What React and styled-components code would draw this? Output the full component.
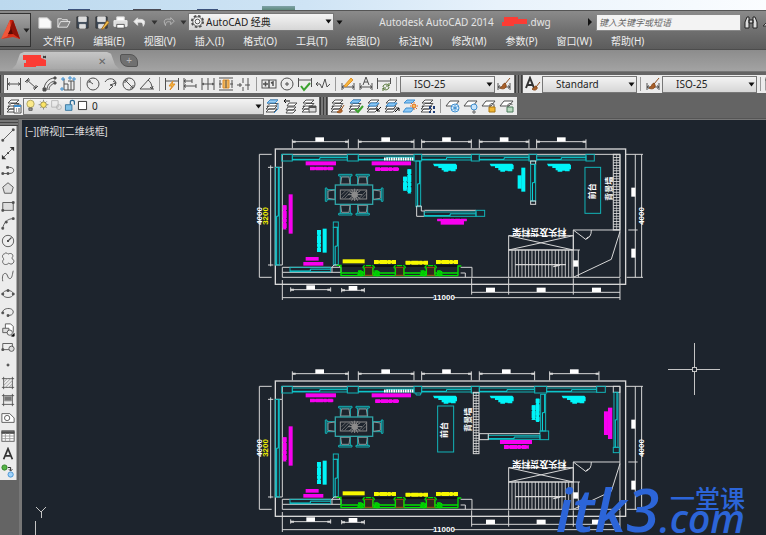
import React, { useState } from 'react';
import styled, { createGlobalStyle } from 'styled-components';

const GlobalStyle = createGlobalStyle`
  * {
    box-sizing: border-box;
  }
  body {
    margin: 0;
    overflow: hidden;
    font-family: "Noto Sans", "Noto Sans CJK SC", sans-serif;
    font-size: 10px;
  }
  button, select, input {
    font-family: inherit;
    margin: 0;
  }
`;

const Window = styled.div`
  display: flex;
  flex-direction: column;
  height: 100vh;
  background: #646464;
  overflow: hidden;
`;
const Desktop = styled.div`
  flex: none;
  height: 10px;
  background:
    linear-gradient(#7fa2a8, #5e8a7c) 262px 6px / 33px 4px no-repeat,
    linear-gradient(#3c527c, #3c527c) 68px 9px / 22px 1px no-repeat,
    linear-gradient(#4a4a55, #4a4a55) 133px 9px / 28px 1px no-repeat,
    linear-gradient(#3c527c, #3c527c) 197px 9px / 21px 1px no-repeat,
    linear-gradient(90deg, #bcd9ee, #cfe4f5 40%, #e8f2fb 65%, #fbfdff);
`;
const Header = styled.header`
  display: flex;
  flex: none;
  height: 40px;
  border-top: 1px solid #555;
  border-bottom: 1px solid #4c4c4c;
  background: linear-gradient(#8b8b8b, #707070 50%, #5c5c5c);
`;
const AppButton = styled.button`
  display: flex;
  align-items: center;
  flex: none;
  width: 31px;
  height: 34px;
  margin-top: 2px;
  padding: 0;
  border: 1px solid #333;
  border-left: none;
  background: linear-gradient(#a2a2a2, #6b6b6b);
`;
const HeaderRows = styled.div`
  flex: 1;
  min-width: 0;
`;
const TitleRow = styled.div`
  display: flex;
  align-items: center;
  height: 22px;
  margin-right: -4px;
  padding-left: 4px;
`;
const QuickButton = styled.button`
  display: flex;
  align-items: center;
  justify-content: center;
  flex: none;
  width: ${p => p.$narrow ? 10 : 19}px;
  height: 18px;
  padding: 0;
  border: none;
  background: none;
`;
const SelectBox = styled.div`
  position: relative;
  flex: ${p => p.$grow ? '0 0 ' + p.$grow + 'px' : 'none'};
  height: ${p => p.$tall ? 18 : 17}px;
  svg {
    position: absolute;
    pointer-events: none;
  }
  .arrow {
    right: 2px;
    top: 6px;
  }
  .lead {
    left: 2px;
    top: 1px;
  }
`;
const Select = styled.select`
  appearance: none;
  display: block;
  width: 100%;
  height: 100%;
  padding: 0 0 0 ${p => p.$indent}px;
  border: 1px solid #777;
  border-radius: 0;
  background: linear-gradient(#f4f4f4, #d6d6d6);
  color: #222;
  font-size: 10px;
  line-height: 14px;
`;
const Title = styled.div`
  display: flex;
  align-items: center;
  flex: 1;
  justify-content: center;
  gap: 8px;
  min-width: 0;
  color: #e4e4e4;
  font-size: 10px;
  white-space: nowrap;
`;
const Search = styled.input`
  flex: 0 0 145px;
  height: 17px;
  padding: 0 2px;
  border: 1px solid #888;
  border-radius: 0;
  background: #f3f3f3;
  font-size: 9px;
  font-style: italic;
  &::placeholder {
    color: #666;
    opacity: 1;
  }
`;
const Menu = styled.nav`
  display: flex;
  gap: 19px;
  padding-left: 12px;
`;
const MenuLink = styled.a`
  color: #eee;
  font-size: 10px;
  line-height: 17px;
  text-decoration: none;
  white-space: nowrap;
`;

const Tabs = styled.div`
  display: flex;
  align-items: flex-end;
  flex: none;
  height: 22px;
  padding: 0 0 2px 12px;
  background: linear-gradient(#8c8c8c, #a3a3a3);
  border-bottom: 1px solid #777;
`;
const Tab = styled.div`
  display: flex;
  align-items: center;
  justify-content: space-between;
  width: 107px;
  height: 17px;
  padding: 0 13px 0 10px;
  background: linear-gradient(#c6c6c6, #a8a8a8);
  clip-path: polygon(0 100%, 4px 75%, 8px 10%, 12px 0, 95px 0, 99px 10%, 103px 75%, 100% 100%);
`;
const TabClose = styled.button`
  padding: 0;
  border: none;
  background: none;
  color: #666;
  font-size: 10px;
  line-height: 12px;
`;
const NewTab = styled.button`
  width: 18px;
  height: 13px;
  margin: 0 0 2px 1px;
  padding: 0;
  border: 1px solid #555;
  border-radius: 2px 8px 2px 8px;
  background: #707070;
  color: #bbb;
  font-size: 10px;
  line-height: 9px;
`;

const Bars = styled.div`
  display: flex;
  flex-direction: column;
  flex: none;
  gap: 4px;
  padding: 3px 0;
  border-bottom: 1px solid #555;
`;
const BarRow = styled.div`
  display: flex;
  gap: 1px;
`;
const Grip = styled.div`
  flex: none;
  width: ${p => p.$edge ? 3 : 7}px;
  height: 18px;
  background: repeating-linear-gradient(90deg, #3d3d3d 0 1px, #777 1px 3px);
`;
const Panel = styled.div`
  display: flex;
  align-items: center;
  flex: none;
  height: 18px;
  padding: 0 1px;
  background: #ececec;
`;
const Tool = styled.button`
  display: flex;
  align-items: center;
  justify-content: center;
  flex: ${p => p.$stack ? '1' : 'none'};
  width: ${p => p.$stack ? 15 : 18}px;
  min-height: 0;
  padding: 0;
  border: none;
  background: none;
`;
const Divider = styled.span`
  flex: none;
  width: 1px;
  height: 14px;
  margin: 0 3px;
  background: #999;
`;
const LayerLead = styled.div`
  display: flex;
  position: absolute;
  left: 1px;
  top: 1px;
  pointer-events: none;
  svg {
    position: static;
  }
`;

const Body = styled.div`
  display: flex;
  flex: 1;
  min-height: 0;
`;
const Side = styled.aside`
  flex: none;
  width: 18px;
`;
const SideGrip = styled.div`
  height: 7px;
  background: repeating-linear-gradient(#444 0 1px, #777 1px 3px);
`;
const SidePanel = styled.div`
  display: flex;
  flex-direction: column;
  width: 17px;
  height: 354px;
  background: #ececec;
  border-right: 1px solid #aaa;
`;
const Viewport = styled.main`
  position: relative;
  flex: 1;
  min-width: 0;
  margin: 0 0 0 1px;
  border: 2px solid #777;
  border-width: 1px 0 0 3px;
  background: #1d242d;
  overflow: hidden;
`;
const Sheet = styled.svg`
  display: block;
  width: 100%;
  height: 100%;
`;
const ViewLabel = styled.div`
  position: absolute;
  left: 3px;
  top: 5px;
  color: #ddd;
  font-family: "Liberation Sans", "Noto Sans CJK SC", sans-serif;
  font-size: 10px;
  line-height: 14px;
`;
const Watermark = styled.div`
  position: absolute;
  right: 21px;
  bottom: 3px;
  display: flex;
  align-items: flex-end;
  color: #2c65d8;
  font-family: "Open Sans", "Noto Sans CJK SC", sans-serif;
`;
const MarkBig = styled.span`
  font-size: 60px;
  font-style: italic;
  font-weight: 600;
  line-height: 46px;
`;
const MarkSide = styled.span`
  display: flex;
  flex-direction: column;
  align-items: flex-end;
`;
const MarkName = styled.span`
  font-size: 25px;
  font-weight: 500;
  line-height: 12px;
`;
const MarkCom = styled.span`
  font-size: 39px;
  font-style: italic;
  font-weight: 600;
  line-height: 28px;
`;

const K = '#505050';
const O = '#e0902a';
const G = '#3aa22e';
const B = '#3f8fd0';

const layers = (
  <g>
    <path d="M5 2h8l-3 3H2zM5 5.500h8l-3 3H2z" fill="#fff" />
    <path d="M4 8h8l-3 3H1zM4 11h8l-3 3H1z" fill="#fff" />
  </g>
);
const plane = <path d="M5 3h9l-4 5H1z" fill="#fff" />;
const brush = <path d="M14 2l-5 6M9 7c-3 1-2 4-5 5 3 2 7 0 6-3z" stroke="#8a4b1c" fill="#a85f28" />;
const dimBase = <path d="M2 7v7M14 7v7M2 11h12M4 9.500L2 11l2 1.500M12 9.500l2 1.500-2 1.500" />;

const ICONS = {
  linear: <path d="M1.500 2v12M14.500 2v12M2 8h12M4 6.500L2 8l2 1.500M12 6.500L14 8l-2 1.500" />,
  aligned: <path d="M1 6l4-4M10 14l4-4M3 4l9 8M3 7V4h3M12 9v3H9" />,
  arcLen: <g><path d="M2 14C2 7 7 2 13 2M7 14c0-4 3-6 6-7M5 14c0-5 3-8 8-9" /><path d="M1 12h3v3H1zM12 1h2v2h-2zM12 6h2v2h-2z" fill={K} /></g>,
  ordinate: <g><path d="M4 3v11h10M4 8h4v6M8 5h6v9M11 5v9" /><path d="M2 2h2v2H2zM9 1h2v2H9zM13 2h2v2h-2zM1 12h2v2H1z" stroke={B} /></g>,
  radius: <g><circle cx="8" cy="8" r="6" /><path d="M8 8L4 5M4 7V5h2" /></g>,
  jogged: <path d="M2 6c3-5 10-4 11 1M13 7l-6 2 3 1-4 4M10 5l3 2-1 3" />,
  diameter: <g><circle cx="8" cy="8" r="6" /><path d="M4 4l8 8M4 7V4h3M12 9v3H9" /></g>,
  angular: <path d="M1 13h14M1 13L11 2M9 4c3 2 4 5 4 9M11 11l2 2 1-3" />,
  quick: <g><path d="M1.500 2v12M14.500 2v12M2 5h12" /><path d="M9 5l-4 5h3l-2 4 5-6H8z" stroke={O} fill="#f6b73c" /></g>,
  baseline: <path d="M2 2v12M2 5h8M10 3v4M2 10h12M14 8v4M4 3.500L2 5l2 1.500M4 8.500L2 10l2 1.500" />,
  continue: <path d="M2 2v12M8 2v12M14 2v12M2 8h12M4 7L2.500 8 4 9M12 7l1.500 1L12 9" />,
  space: <g><path d="M1 2h14M1 14h14M1 8h3M12 8h3M2 4v8M14 4v8" /><path d="M5 4h6v8H5z" stroke={O} fill="#efb45a" /><path d="M8 4v8" /></g>,
  break: <path d="M1 9h5M9 9h5M7 2v5M7 11v4M12 2v12M4 7v4" />,
  tolerance: <g><rect x="1" y="4" width="14" height="8" /><path d="M8 4v8M2 8h5M4.500 5.500v5M10 7l2-1v4" strokeWidth="1.500" /></g>,
  center: <g><circle cx="8" cy="8" r="6" /><path d="M6 8h4M8 6v4" /></g>,
  inspect: <g><path d="M1.500 2v9M14.500 2v9M2 4h12" /><path d="M4 10l3 4 6-7" stroke={G} strokeWidth="2" /></g>,
  jogLine: <path d="M1 8h4l2 4 3-9 2 8 3-3M1 8l2-2M1 8l2 2" />,
  dimEdit: <g>{dimBase}<path d="M4 10l7-8 2 2-7 7z" stroke={O} fill="#f6b73c" /></g>,
  textEdit: <g>{dimBase}<path d="M5 9l3-8 3 8M6 6h4" /></g>,
  update: <g><path d="M1.500 2v11M14.500 2v6M2 5h12" /><path d="M7 11c0-3 5-4 6-1M13 11c0 3-5 4-6 1M13 7v3h-3M7 15v-3h3" stroke="#4c6f2c" /></g>,
  dimStyle: <g>{dimBase}{brush}</g>,
  textStyle: <g><path d="M1 12L5 2l4 10M2.500 9h5" stroke="#333" strokeWidth="2" /><path d="M15 6l-4 5M11 10c-2 0-2 3-4 3 2 2 6 1 5-2z" stroke="#8a4b1c" fill="#a85f28" /></g>,
  table: <g><rect x="1" y="2" width="14" height="12" fill="#fff" /><path d="M1 3h14v2H1z" fill={K} /><path d="M1 8h14M1 11h14M5 5v9M10 5v9" stroke="#999" /></g>,
  layerProps: <g>{layers}<path d="M8 7h7v8H8z" fill="#fff" /><path d="M8 8h7" stroke={B} strokeWidth="2" /><path d="M10 11h1M12 11h2M10 13h1M12 13h2" /></g>,
  layerCur: <g>{layers}<path d="M5 2h8l-3 3H2z" fill="#9dcdf0" stroke={B} /><path d="M13 5v6l-4 4" stroke={B} /></g>,
  layerPrev: <g><path d="M6 5h8l-3 3H4zM5 9h8l-3 3H3zM5 12h8l-3 3H3z" fill="#fff" /><path d="M1 3h6M3 1L1 3l2 2" stroke="#111" /></g>,
  layerState: <g>{layers}<path d="M8 8h7v6H8z" fill="#ddd" /><path d="M8 9h7" strokeWidth="2" /></g>,
  layerBrush: <g>{layers}<path d="M14 7l-3 5M11 11c-2 0-2 3-4 3 3 2 6 0 5-2z" stroke="#9b5521" fill="#b8682c" /></g>,
  layerOk: <g>{layers}<path d="M5 2h8l-3 3H2z" fill="#8cc8f5" stroke={B} /><path d="M7 11l3 3 5-6" stroke={G} strokeWidth="2" /></g>,
  layerIn: <g>{layers}<path d="M5 5h8l-3 3H2z" fill="#8cc8f5" stroke={B} /><path d="M15 9l-4 4M11 10v3h3" stroke="#111" /></g>,
  layerOut: <g>{layers}<path d="M5 5h8l-3 3H2z" fill="#8cc8f5" stroke={B} /><path d="M11 14l4-4M12 10h3v3" stroke="#111" /></g>,
  layerIso: <g><path d="M5 2h8l-3 3H2zM4 10h8l-3 4H1z" fill="#8cc8f5" stroke={B} /><circle cx="12" cy="8" r="2" stroke="#e06a1c" fill="#f7c05c" /><path d="M12 4v1M12 11v1M8 8h1M15 8h1M9 5l1 1M14 10l1 1" stroke="#e06a1c" /></g>,
  layerWalk: <g>{layers}<path d="M10 8v3M14 8v3M10 13v2M14 13v2" stroke="#1e3d78" strokeWidth="2" /></g>,
  freeze: <g>{plane}<circle cx="10" cy="10" r="4" fill="#dff0fd" stroke={B} /><path d="M10 7v6M7.500 8.500l5 3M7.500 11.500l5-3" stroke={B} /></g>,
  off: <g>{plane}<circle cx="11" cy="9" r="3" fill="#c9e4fa" stroke={B} /><path d="M10 13h2v2h-2z" stroke="#666" /></g>,
  lock: <g>{plane}<path d="M9 9V7c0-2 4-2 4 0v2" /><path d="M8 9h6v5H8z" fill="#f2b632" stroke="#a87412" /></g>,
  unlock: <g>{plane}<path d="M9 9V7c0-2 4-2 4 0" /><path d="M8 9h6v5H8z" fill="#bcd9c0" stroke="#4b7a5a" /></g>,

  line: <g><path d="M2 14L14 2" /><path d="M1 13h2v2H1zM13 1h2v2h-2z" fill={K} /></g>,
  xline: <g><path d="M2 14L14 2" /><path d="M1 15v-5l5 5zM15 1v5l-5-5zM7 7h2v2H7z" fill="#333" stroke="none" /></g>,
  pline: <g><path d="M2 12h6M8 5h2c6 0 6 7 0 7H8" /><path d="M6.500 4h2v2h-2zM1 11h2v2H1zM7 11h2v2H7z" fill={K} /></g>,
  polygon: <path d="M8 2l6 5-2 7H4L2 7z" fill="#ddd" />,
  rect: <g><path d="M2 4h12v9H2z" fill="#ddd" /><path d="M1 12h2v2H1zM13 3h2v2h-2z" fill={K} /></g>,
  arc: <g><path d="M2 14C3 8 7 3 14 3" /><path d="M1 13h2v2H1zM5 6h2v2H5zM13 2h2v2h-2z" fill={K} /></g>,
  circle: <g><circle cx="8" cy="8" r="6.500" fill="#eee" /><path d="M8 8l4-4M7.500 7.500h1v1h-1z" strokeWidth="1.300" /></g>,
  cloud: <path d="M4 2c1-1.500 3-1 4 .5 2-1.500 6-1 5.500 2.500-.5 1-1 1.500-1 2.500 2 1 3 3 1.500 5-1.500 2-4 1.500-5 0-2 2.500-6 2.500-7-.5-.5-2 .5-3 1.500-4C1 6 1 3 4 2z" fill="#eee" />,
  spline: <path d="M2 14c-1-5 0-9 3-9s2 6 5 6 3-6 4-9" />,
  ellipse: <g><ellipse cx="8" cy="8" rx="6" ry="4" /><path d="M1 7h2v2H1zM13 7h2v2h-2zM7 3h2v2H7z" fill={K} /></g>,
  ellArc: <g><path d="M2 9c-1-6 12-7 12-1 0 3-3 4-6 4" /><path d="M1 8h2v2H1zM7 11h2v2H7z" fill={K} /></g>,
  insert: <g><path d="M5 6V1h6l3 3v7" fill="#fff" /><path d="M2 6h7v5H2z" fill="#ddd" /><circle cx="10" cy="11" r="3" fill="#eee" /><path d="M12 15h3v-3z" fill="#111" stroke="#111" /></g>,
  block: <g><path d="M2 4h11v7H2z" fill="#eee" /><circle cx="12" cy="10" r="3" fill="#ddd" /><path d="M1 10h2v2H1z" fill={K} /></g>,
  point: <path d="M7 7h2v2H7z" fill={K} />,
  hatch: <g><path d="M3 1v14M13 1v14M1 3h14M1 13h14" /><path d="M3 7l4-4M3 11l8-8M5 13l8-8M9 13l4-4" stroke="#999" /></g>,
  gradient: <g><path d="M3 1v14M13 1v14M1 3h14M1 13h14" /><path d="M4 4h8v5H4z" fill="#777" stroke="#999" /></g>,
  region: <g><path d="M1 3h9l5 5v5H1z" fill="#fff" /><circle cx="7" cy="8" r="3" /></g>,
  mtext: <path d="M3 14L8 2l5 12M5 10h6" stroke="#333" strokeWidth="2" />,
  addSel: <g><circle cx="4" cy="4" r="3" fill="#55b345" stroke="#2e7d26" /><circle cx="11" cy="12" r="3" fill="#9fd2fa" stroke={B} /><path d="M8 4h3v3M9 6l2 2 2-2" stroke="#111" /></g>,

  bulb: <g><circle cx="8" cy="6" r="4.500" fill="#fbe98a" stroke="#a59b55" /><path d="M6 11h4v3H6z" fill="#999" /></g>,
  sun: <g><circle cx="8" cy="7" r="3.500" fill="#fbe466" stroke="#8b8345" /><path d="M8 1v2M8 11v2M2 7h2M12 7h2M4 3l1 1M11 10l1 1M12 3l-1 1M5 10l-1 1" stroke="#777" /></g>,
  vpSun: <g stroke="#b0b0b0"><path d="M2 2h8v8H2z" /><circle cx="11" cy="10" r="3" /></g>,
  padlock: <g><path d="M9 7V4c0-3 5-3 5 0v3" stroke="#2b6a94" strokeWidth="1.500" /><path d="M3 7h8v7H3z" fill="#7fc0e6" stroke="#2b6a94" /></g>,
  swatch: <path d="M3 3h10v10H3z" fill="#fff" stroke="#111" />,

  newFile: <path d="M2 3h9l4 4v7H2z" fill="#f8f8f8" stroke="#ccc" />,
  open: <path d="M2 13V4h4l1 1h5v2M2 13l3-6h10l-3 6z" fill="#888" stroke="#e4e4e4" />,
  save: <g><path d="M2 2h12v12H2z" fill="#3e4a58" stroke="#333" /><path d="M4 2h8v5H4zM5 10h6v4H5z" fill="#ddd" stroke="#ddd" /></g>,
  saveAs: <g><path d="M2 2h12v12H2z" fill="#3e4a58" stroke="#333" /><path d="M4 2h8v5H4zM5 10h6v4H5z" fill="#ddd" stroke="#ddd" /><path d="M14 6l2 2-6 7-2 0z" fill="#f3c14d" stroke="#9b6520" /></g>,
  print: <g><path d="M4 2h8v4H4z" fill="#fff" stroke="#ddd" /><path d="M1 6h14v6H1z" fill="#ddd" stroke="#eee" /><path d="M4 10h8v4H4z" fill="#fff" stroke="#555" /></g>,
  undo: <path d="M6 3L2 7l4 4V8c4-1 6 0 6 4 4-7-1-8-6-7z" fill="#eee" stroke="#ddd" />,
  redo: <path d="M10 3l4 4-4 4V8c-4-1-6 0-6 4-4-7 1-8 6-7z" fill="none" stroke="#bbb" />,
  find: <g stroke="#222" fill="#ddd"><path d="M2 8l2-5h2v11H2zM10 14V3h2l2 5v6zM6 6h4v3H6z" /></g>,
  gear: <g><circle cx="8" cy="8" r="6" strokeDasharray="2.700 2" strokeWidth="2" /><circle cx="8" cy="8" r="5" fill="#f2f2f2" /><circle cx="8" cy="8" r="2.500" /></g>,
};

const Icon = ({ name, size = 16, className }) => (
  <svg className={className} width={size} height={size} viewBox="0 0 16 16" fill="none" stroke={K} aria-hidden="true">
    {ICONS[name]}
  </svg>
);

const Caret = ({ color = '#111', className }) => (
  <svg className={className} width="7" height="5" viewBox="0 0 7 5" aria-hidden="true">
    <path d="M0.500 0.500h6L3.500 4.500z" fill={color} />
  </svg>
);

const ToolSet = ({ items, stack }) => items.map((name, i) => (
  name === '|' ? <Divider key={i} /> : (
    <Tool key={i} type="button" aria-label={name} $stack={stack}>
      <Icon name={name} size={stack ? 14 : 16} />
    </Tool>
  )
));

const DropDown = ({ label, options, width, indent, tall, children }) => (
  <SelectBox $grow={width} $tall={tall}>
    <Select aria-label={label} $indent={indent}>
      {options.map(o => <option key={o}>{o}</option>)}
    </Select>
    {children}
    <Caret className="arrow" />
  </SelectBox>
);

const MENUS = ['文件(F)', '编辑(E)', '视图(V)', '插入(I)', '格式(O)', '工具(T)', '绘图(D)', '标注(N)', '修改(M)', '参数(P)', '窗口(W)', '帮助(H)'];

const DIM_TOOLS = [
  'linear', 'aligned', 'arcLen', 'ordinate', '|', 'radius', 'jogged', 'diameter', 'angular', '|',
  'quick', 'baseline', 'continue', 'space', 'break', '|', 'tolerance', 'center', 'inspect', 'jogLine', '|',
  'dimEdit', 'textEdit', 'update', '|',
];
const LAYER_TOOLS = [
  'layerBrush', 'layerOk', 'layerIn', 'layerOut', 'layerIso', 'layerWalk', '|', 'freeze', 'off', 'lock', 'unlock',
];
const DRAW_TOOLS = [
  'line', 'xline', 'pline', 'polygon', 'rect', 'arc', 'circle', 'cloud', 'spline', 'ellipse', 'ellArc',
  'insert', 'block', 'point', 'hatch', 'gradient', 'region', 'table', 'mtext', 'addSel',
];

const CYAN = '#12b4b8';
const AQUA = '#00f4f8';
const PINK = '#f800f0';
const WHITE = '#d8d8d8';

/* The plans are drawn at three units to a screen pixel. */
const Box = ({ x, y, w, h, color = CYAN }) => (
  <rect x={x} y={y} width={w} height={h} stroke={color} strokeWidth="3" fill="none" />
);

const Wall = ({ x, y = 78, w, h = 12 }) => {
  const mid = w > h
    ? `M${x} ${y + h - 2}h${w / 2}v${-h / 2 + 1}h${w / 2}`
    : `M${x + w - 3} ${y}v${h / 2}h${-w / 2 + 1}v${h / 2}`;
  return (
    <g fill="none" stroke={CYAN}>
      <rect x={x} y={y} width={w} height={h} strokeWidth="3" />
      <path d={mid} stroke="#0cd8dc" strokeWidth="3" />
    </g>
  );
};

// a dimension line with its end ticks and a filled value
const TopDim = ({ from, to, y = 35, down = 20, label }) => (
  <g stroke={WHITE} strokeWidth="3">
    <path d={`M${from} ${y}H${to}M${from} ${y - 7}V${y + down}M${to} ${y - 7}V${y + down}`} />
    <path d={`M${from} ${y}h10M${to} ${y}h-10`} strokeWidth="6" />
    <rect x={(label || (from + to) / 2) - 13} y={y - 13} width="26" height="13" fill="#fff" stroke="none" />
  </g>
);

const Bar = ({ x, y, w, h, color }) => <rect x={x} y={y} width={w} height={h} fill={color} />;

// small print that closes up into a ragged bar
const Print = ({ x, y, w, h, color }) => {
  const wide = w > h;
  const d = wide ? `M${x} ${y + h / 2}h${w}` : `M${x + w / 2} ${y}v${h}`;
  const t = wide ? h : w;
  return (
    <g stroke={color}>
      <path d={d} strokeWidth={t * 0.75} />
      <path d={d} strokeWidth={t} strokeDasharray="14 3 22 2 9 4" />
    </g>
  );
};

const Tag = ({ x, y = 101 }) => (
  <path
    d={`M${x} ${y}h68l4 5v12h-4v6h-14v-2h-8v3h-14v-4h-6v-7h-10v-5h-12z`}
    fill={AQUA}
  />
);

const Ladder = ({ x, y, w, h }) => (
  <g stroke={WHITE} fill="none">
    <path d={`M${x + w / 2} ${y}v${h}`} stroke="#c4c4c4" strokeWidth={w} strokeDasharray="3 5" />
    <path d={`M${x + w / 2} ${y}v${h}`} strokeWidth="3" strokeOpacity="0.700" />
    <rect x={x} y={y} width={w} height={h} strokeWidth="3" />
  </g>
);

const PlanText = ({ x, y, size = 24, color = '#fff', turn = -90, children }) => (
  <text
    transform={`translate(${x} ${y}) rotate(${turn})`}
    fontFamily="'Liberation Sans Narrow', 'Liberation Sans', 'Noto Sans CJK SC', sans-serif"
    fontSize={size}
    fontWeight="700"
    textAnchor="middle"
    dominantBaseline="central"
    fill={color}
  >
    {children}
  </text>
);

const Chair = ({ x, y, turn = 0 }) => (
  <g transform={`translate(${x} ${y}) rotate(${turn})`} fill="none" strokeWidth="3">
    <path d="M-20 -16H20V-11H-20zM-15 -11V16M15 -11V16" stroke={CYAN} />
    <path d="M-11 -8H11L14 13H-14z" stroke="#8b9699" />
  </g>
);

const DiningTable = () => (
  <g>
    <Chair x={286} y={149} />
    <Chair x={338} y={149} />
    <Chair x={286} y={239} turn={180} />
    <Chair x={338} y={239} turn={180} />
    <Chair x={242} y={194} turn={270} />
    <Chair x={383} y={194} turn={90} />
    <rect x="256" y="165" width="112" height="58" fill="none" stroke="#2fa3a6" strokeWidth="4" />
    <g stroke="#8b8b8b" strokeWidth="2" fill="none">
      <rect x="271" y="180" width="79" height="27" strokeWidth="3" />
      <path d="M275 205l22-23M284 205l22-23M275 194l12-12M328 205l20-22M336 205l12-12" />
      <path d="M314 176v37M298 183l33 23M298 206l33-24M294 194h42M305 178l18 34M323 178l-18 34" strokeWidth="3" />
      <circle cx="314" cy="194" r="9" fill="#8b8b8b" />
    </g>
  </g>
);

const Sofas = () => (
  <g fill="none">
    <path d="M273 408H624" stroke="#080a0c" strokeWidth="5" />
    <path d="M260 406h13v31H624M273 429H624M624 437V408h10" stroke="#00e000" strokeWidth="4" />
    {[356, 449, 542].map(x => (
      <g key={x}>
        <path d={`M${x - 12} 412h24v24h-24z`} stroke="#a8441c" fill="#33261f" strokeWidth="3" />
        <path d={`M${x - 8} 407h16M${x - 10} 407c-9 0-8 8-3 8v20M${x + 10} 407c9 0 8 8 3 8v20`} stroke="#00e000" strokeWidth="4" />
      </g>
    ))}
    {[331, 380, 519, 568].map(x => (
      <path key={x} d={`M${x - 8} 433l6-6-5-4 9-1 7 4-4 5 5 5-9 2z`} fill="#00c800" stroke="#00e000" strokeWidth="3" />
    ))}
  </g>
);

const Stairs = () => (
  <g stroke={WHITE} strokeWidth="3" fill="none">
    <path d="M776 317H970V360H776zM776 317l194 43M776 360l194-43" />
    <path d="M776 360V442M776 360H990M985 360V442M970 300V442" />
    {Array.from({ length: 19 }, (_, i) => (
      <path key={i} d={`M${786 + i * 10} 360V442`} strokeWidth="2.500" />
    ))}
    <path d="M796 404H948M910 410l20-5" strokeWidth="4" />
    <rect x="970" y="391" width="14" height="19" fill="#fff" stroke="none" />
    <path d="M970 300H1110M970 300l37 28 8-8M1007 328q18-6 17-28M1110 305l-26 83-114 54" />
  </g>
);

// walls, furniture and dimensions that both plans have
const PlanBase = () => (
  <g>
    <g stroke={WHITE} fill="none" strokeWidth="3">
      <rect x="76" y="57" width="1051" height="406" strokeWidth="4" />
      <path d="M97 73H1110V442H97M97 73V112H76M97 112V405H76" />
      <path d="M97 412H273V427H97zM97 427V442M632 412h34v30M632 429h14v13" />
      <path d="M28 73V442M28 73H65M28 442H65M62 106V409M54 112H70M54 405H70" />
      <path d="M1156 73V442M1175 73V442M1127 73h52M1135 300h28M1130 442h49" />
      <path d="M97 450V510M97 503H552M612 503H1110M1110 445V510" />
      <path d="M665 445V494M776 445V494M970 445V494M665 487H1110" />
    </g>
    <TopDim from={127} to={295} label={209} />
    <TopDim from={325} to={492} label={407} />
    <TopDim from={515} to={664} />
    <TopDim from={122} to={242} y={479} down={6} />
    <TopDim from={275} to={343} y={481} down={6} />
    <Bar x={708} y={473} w={27} h={13} color="#fff" />
    <Bar x={860} y={473} w={27} h={13} color="#fff" />
    <Bar x={1026} y={473} w={27} h={13} color="#fff" />
    <Bar x={1144} y={173} w={12} h={27} color="#fff" />
    <Bar x={1144} y={356} w={12} h={27} color="#fff" />
    <PlanText x={29} y={258}>4000</PlanText>
    <PlanText x={46} y={258} color="#f4f400">3200</PlanText>
    <PlanText x={1175} y={258}>4000</PlanText>
    <PlanText x={582} y={504} turn={0}>11000</PlanText>

    <Box x={95} y={73} w={32} h={20} />
    <Wall x={127} w={165} />
    <Box x={292} y={73} w={33} h={20} />
    <Wall x={325} w={167} />
    <path d="M402 87H492" stroke="#fff" strokeWidth="9" strokeDasharray="5 2" />
    <Box x={492} y={73} w={23} h={20} />
    <Wall x={515} w={149} />
    <Box x={664} y={73} w={24} h={20} />
    <Wall x={76} y={112} w={12} h={293} />
    <Wall x={120} y={412} w={122} h={13} />
    <Box x={250} y={276} w={15} h={16} />
    <Wall x={250} y={292} w={15} h={113} />
    <path d="M246 427V412l6-7h12l8 7" stroke={WHITE} strokeWidth="3" fill="none" />

    <Bar x={167} y={94} w={91} h={12} color={PINK} />
    <Print x={180} y={110} w={70} h={11} color={PINK} />
    <Bar x={365} y={94} w={118} h={12} color={PINK} />
    <Print x={376} y={112} w={71} h={11} color={PINK} />
    <Bar x={116} y={193} w={12} h={118} color={PINK} />
    <Print x={98} y={226} w={12} h={72} color={PINK} />
    <Bar x={167} y={381} w={39} h={11} color={PINK} />
    <Bar x={160} y={396} w={60} h={11} color={PINK} />
    <Bar x={218} y={296} w={12} h={72} color={AQUA} />
    <Print x={201} y={300} w={12} h={66} color={AQUA} />
    <Bar x={278} y={388} w={66} h={12} color="#f8f800" />
    <Print x={372} y={390} w={66} h={12} color="#f8f800" />
    <Print x={467} y={392} w={67} h={12} color="#f8f800" />
    <Print x={558} y={390} w={66} h={12} color="#f8f800" />
    <Tag x={549} />
    <Tag x={719} />
    <DiningTable />
    <Sofas />
    <Stairs />
    <PlanText x={868} y={306} turn={180} size={27}>料头及货料架</PlanText>
  </g>
);

const PlanOne = () => (
  <g transform="translate(228 10) scale(0.3333)">
    <PlanBase />
    <TopDim from={688} to={837} />
    <TopDim from={860} to={1008} />
    <Wall x={688} w={149} />
    <Box x={837} y={73} w={23} h={20} />
    <Wall x={860} w={148} />
    <Box x={1008} y={73} w={25} h={20} />
    <Wall x={498} y={93} w={14} h={137} />
    <path d="M500 228h14v15h9v16h-23z" stroke={WHITE} strokeWidth="3" fill="none" />
    <path d="M523 241H678" stroke={WHITE} strokeWidth="3" />
    <Wall x={523} y={246} w={155} h={13} />
    <Box x={678} y={241} w={26} h={18} />
    <Print x={562} y={266} w={88} h={8} color={PINK} />
    <Bar x={572} y={272} w={70} h={12} color={PINK} />
    <Print x={472} y={118} w={12} h={72} color={AQUA} />
    <Print x={459} y={140} w={12} h={42} color={AQUA} />
    <Bar x={814} y={113} w={12} h={72} color={AQUA} />
    <Bar x={803} y={136} w={12} h={40} color={AQUA} />
    <Box x={842} y={93} w={15} h={10} color={WHITE} />
    <Wall x={842} y={103} w={15} h={110} />
    <Box x={842} y={213} w={15} h={10} color={WHITE} />
    <Tag x={891} />
    <Box x={1005} y={112} w={47} h={138} />
    <PlanText x={1028} y={184}>前台</PlanText>
    <PlanText x={1078} y={176}>背景墙</PlanText>
    <Ladder x={1090} y={73} w={20} h={227} />
  </g>
);

const PlanTwo = () => (
  <g transform="translate(228 242) scale(0.3333)">
    <PlanBase />
    <TopDim from={688} to={854} label={769} />
    <TopDim from={899} to={1047} />
    <Wall x={688} w={166} />
    <Box x={854} y={73} w={36} h={20} />
    <Wall x={890} w={150} />
    <Box x={1040} y={73} w={26} h={18} />
    <Box x={1090} y={73} w={20} h={18} color={WHITE} />
    <path d="M498 93v6h14v-6" stroke={CYAN} strokeWidth="3" fill="none" />
    <Wall x={1092} y={91} w={12} h={165} />
    <Box x={1090} y={256} w={18} h={16} />
    <Bar x={1062} y={148} w={12} h={71} color={PINK} />
    <Bar x={1074} y={137} w={13} h={94} color={PINK} />
    <Ladder x={670} y={91} w={17} h={184} />
    <PlanText x={655} y={173}>背景墙</PlanText>
    <Box x={563} y={132} w={48} h={138} />
    <PlanText x={585} y={204}>前台</PlanText>
    <Wall x={872} y={97} w={15} h={110} />
    <Box x={870} y={207} w={26} h={26} />
    <path d="M715 215H870" stroke={WHITE} strokeWidth="3" />
    <Wall x={715} y={220} w={155} h={12} />
    <Box x={688} y={215} w={27} h={18} color={WHITE} />
    <Bar x={750} y={234} w={96} h={12} color={PINK} />
    <Print x={762} y={249} w={74} h={12} color={PINK} />
    <Print x={857} y={110} w={12} h={70} color={AQUA} />
    <Print x={845} y={130} w={12} h={44} color={AQUA} />
    <Tag x={935} />
  </g>
);

export default function App() {
  const [query, setQuery] = useState('');

  return (
    <Window>
      <GlobalStyle />
      <Desktop />
      <Header>
        <AppButton type="button" aria-label="AutoCAD">
          <svg width="23" height="26" viewBox="0 0 23 26" aria-hidden="true">
            <path d="M10 3h3l7 19-7-4-11 3z" fill="#c8200e" />
            <path d="M10 3L1 22l6-2 4-8z" fill="#f0573a" />
            <path d="M13 3l7 19-6-3-4-8z" fill="#8f1208" />
            <path d="M8 17l3-6 2 6z" fill="#5a0a05" />
            <path d="M1 22l12-5 7 5-7-2z" fill="#d9301a" />
          </svg>
          <Caret color="#222" />
        </AppButton>
        <HeaderRows>
          <TitleRow>
            {['newFile', 'open', 'save', 'saveAs', 'print', 'undo'].map(n => (
              <QuickButton key={n} type="button" aria-label={n}><Icon name={n} size={15} /></QuickButton>
            ))}
            <QuickButton type="button" aria-label="undo list" $narrow><Caret color="#333" /></QuickButton>
            <QuickButton type="button" aria-label="redo"><Icon name="redo" size={14} /></QuickButton>
            <QuickButton type="button" aria-label="redo list" $narrow><Caret color="#333" /></QuickButton>
            <DropDown label="工作空间" options={['AutoCAD 经典']} width={146} indent={17} tall>
              <Icon name="gear" size={15} className="lead" />
            </DropDown>
            <QuickButton type="button" aria-label="customize" $narrow><Caret /></QuickButton>
            <Title>
              <span>Autodesk AutoCAD 2014</span>
              <span>
                <svg width="26" height="10" viewBox="0 0 26 10" aria-hidden="true">
                  <path d="M2 1h14v2h9v5H12v2H0V6h2z" fill="#fb3c34" />
                </svg>
                .dwg
              </span>
            </Title>
            <svg width="10" height="8" viewBox="0 0 10 8" aria-hidden="true"><path d="M2 0l4 4-4 4z" fill="#111" /></svg>
            <Search
              aria-label="搜索"
              placeholder="键入关键字或短语"
              value={query}
              onChange={e => setQuery(e.target.value)}
            />
            <QuickButton type="button" aria-label="find"><Icon name="find" /></QuickButton>
            <QuickButton type="button" aria-label="sign in" $narrow>
              <svg width="8" height="10" viewBox="0 0 8 10" aria-hidden="true"><path d="M8 3L2 9h6" stroke="#333" fill="#ccc" /></svg>
            </QuickButton>
          </TitleRow>
          <Menu>
            {MENUS.map(m => <MenuLink key={m} href="#">{m}</MenuLink>)}
          </Menu>
        </HeaderRows>
      </Header>

      <Tabs>
        <Tab>
          <svg width="28" height="14" viewBox="0 0 28 14" aria-hidden="true">
            <path d="M1 1h18v3l5 2v6H14v1H2V9h2V6H1z" fill="#fb3c34" />
            <path d="M21 2l3 2M24 2l-3 2" stroke="#222" />
          </svg>
          <TabClose type="button" aria-label="关闭">✕</TabClose>
        </Tab>
        <NewTab type="button" aria-label="新建">+</NewTab>
      </Tabs>

      <Bars>
        <BarRow>
          <Grip $edge />
          <Panel>
            <ToolSet items={DIM_TOOLS} />
            <DropDown label="标注样式" options={['ISO-25']} width={95} indent={13} />
            <ToolSet items={['dimStyle']} />
          </Panel>
          <Grip />
          <Panel>
            <ToolSet items={['textStyle']} />
            <DropDown label="文字样式" options={['Standard']} width={95} indent={13} />
            <ToolSet items={['|', 'dimStyle']} />
            <DropDown label="样式" options={['ISO-25']} width={95} indent={13} />
            <ToolSet items={['|', 'table']} />
          </Panel>
        </BarRow>
        <BarRow>
          <Grip $edge />
          <Panel>
            <ToolSet items={['layerProps']} />
            <DropDown label="图层" options={['0']} width={241} indent={68}>
              <LayerLead>
                {['bulb', 'sun', 'vpSun', 'padlock', 'swatch'].map(n => <Icon key={n} name={n} size={13} />)}
              </LayerLead>
            </DropDown>
            <ToolSet items={['layerCur', 'layerPrev', 'layerState']} />
          </Panel>
          <Grip />
          <Panel>
            <ToolSet items={LAYER_TOOLS} />
          </Panel>
        </BarRow>
      </Bars>

      <Body>
        <Side>
          <SideGrip />
          <SidePanel>
            <ToolSet items={DRAW_TOOLS} stack />
          </SidePanel>
        </Side>
        <Viewport>
          <Sheet>
            <PlanOne />
            <PlanTwo />
            <g fill="none" stroke="#c4c4c4">
              <path d="M646 249.500h24M674 249.500h24M672.500 223v24M672.500 251v24" />
              <rect x="670.500" y="247.500" width="4" height="4" />
              <path d="M14 387l5 5 5-5M19.500 392v6M13.500 401v60" />
            </g>
          </Sheet>
          <ViewLabel>[−][俯视][二维线框]</ViewLabel>
          <Watermark>
            <MarkBig>itk3</MarkBig>
            <MarkSide>
              <MarkName>一堂课</MarkName>
              <MarkCom>.com</MarkCom>
            </MarkSide>
          </Watermark>
        </Viewport>
      </Body>
    </Window>
  );
}
